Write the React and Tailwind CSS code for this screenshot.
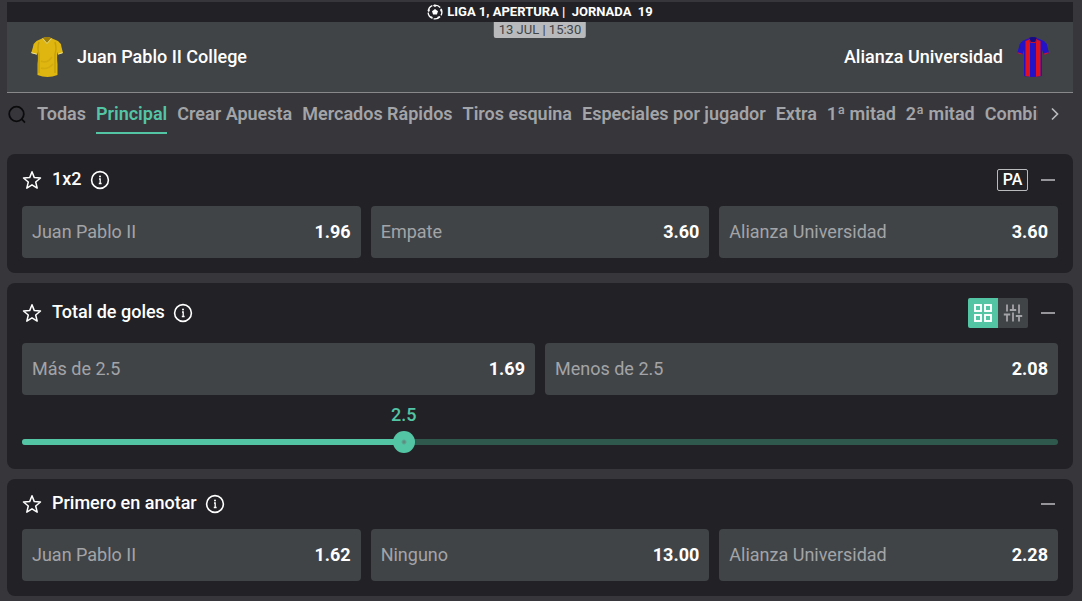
import { useState } from 'react'
import clsx from 'clsx'

const tabs = [
  'Todas',
  'Principal',
  'Crear Apuesta',
  'Mercados Rápidos',
  'Tiros esquina',
  'Especiales por jugador',
  'Extra',
  '1ª mitad',
  '2ª mitad',
  'Combinadas',
]

const GOALS_MIN = 0.75
const GOALS_MAX = 5.5

function BallIcon() {
  return (
    <svg className="size-4" viewBox="0 0 16 16" fill="none" aria-hidden="true">
      <circle cx="8" cy="8" r="6.900" stroke="#fff" strokeWidth="1.300" strokeDasharray="7 1.670" strokeDashoffset="3.500" />
      <path d="M8 5l3 2.200-1.100 3.400H6.100L5 7.200z" fill="#fff" />
      <path
        d="M5.400 1.600L8 3l2.600-1.400A7 7 0 0 0 5.400 1.600zM14.900 8.400l-1.700-1.500.3-2.500a7 7 0 0 1 1.400 4zM1.100 8.400l1.700-1.500-.3-2.500a7 7 0 0 0-1.400 4zM13.400 12.200l-2.500.2-1.200 2.300a7 7 0 0 0 3.700-2.500zM2.600 12.200l2.500.2 1.200 2.300a7 7 0 0 1-3.700-2.500z"
        fill="#fff"
      />
    </svg>
  )
}

function YellowShirt() {
  return (
    <svg className="h-10 w-8" viewBox="0 0 32 40" aria-hidden="true">
      <path d="M12 1Q16-1 20 1l7 3q3 2 3.500 6L32 16l-5 1.500-.5-2.500q-.8 6 0 12v11q-10 4-20 0V27q.8-6 0-12L6 17.500.2 16 2 10q.5-4 3.500-6z" fill="#dfb60f" />
      <path d="M8 5q-2 7 0 12v19M24 5q2 7 0 12v19" stroke="#b8920c" strokeWidth="1.500" fill="none" opacity=".6" />
      <path d="M10 24q6 3 11-4M10 31q7 2 12-4" stroke="#b8920c" strokeWidth="1.500" fill="none" opacity=".3" />
      <path d="M12 1Q16-1 20 1l-4 5z" fill="#9c7d0c" />
      <path d="M11.500 1.500L16 6.500l4.500-5" stroke="#d9d38a" strokeWidth="1" fill="none" />
      <path d="M.4 15.700l5.400 1.500M31.600 15.700l-4.400 1.400" stroke="#e9e2a0" strokeWidth="1" />
    </svg>
  )
}

function StripedShirt() {
  return (
    <svg className="h-10 w-8" viewBox="0 0 32 40" aria-hidden="true">
      <path d="M12 1Q16-1 20 1l7 3q3 2 3.500 6L32 16l-5 1.500L25 13v26q-9 2-18 0V13l-1.500 4.500L.2 16 2 10q.5-4 3.500-6z" fill="#2412c8" />
      <path d="M8.500 4l4-1.500.5 3V39.800l-4.500-.8zM23.500 4l-4-1.500-.5 3V39.800l4.500-.8z" fill="#e01220" />
      <path d="M12 1Q16-1 20 1l-1.500 4h-5z" fill="#170b80" />
      <path d="M12 1.500l1.500 4h5l1.500-4" stroke="#c0122c" strokeWidth="1" fill="none" />
      <path d="M.4 15.700l5 1.500M31.600 15.700l-4.600 1.400" stroke="#d01230" strokeWidth="1.200" />
    </svg>
  )
}

function StarIcon() {
  return (
    <svg className="size-5" viewBox="0 0 20 20" fill="none" aria-hidden="true">
      <path
        d="M10 1.800l2.300 5.800 6.200.4-4.800 4 1.500 6.100-5.200-3.300-5.200 3.300L6.300 12 1.500 8l6.200-.4z"
        stroke="#fff"
        strokeWidth="1.500"
        strokeLinejoin="round"
      />
    </svg>
  )
}

function InfoIcon() {
  return (
    <svg className="size-5" viewBox="0 0 20 20" fill="none" aria-hidden="true">
      <circle cx="10" cy="10" r="8.400" stroke="#fff" strokeWidth="1.600" />
      <path d="M9 9h1.200v4.500M8.800 13.500h2.800" stroke="#fff" strokeWidth="1.300" />
      <circle cx="10" cy="6.600" r="1" fill="#fff" />
    </svg>
  )
}

function GridIcon() {
  return (
    <svg className="size-5" viewBox="0 0 20 20" fill="none" stroke="#fff" strokeWidth="1.900" aria-hidden="true">
      <rect x="2" y="2" width="6" height="6" />
      <rect x="12" y="2" width="6" height="6" />
      <rect x="2" y="12" width="6" height="6" />
      <rect x="12" y="12" width="6" height="6" />
    </svg>
  )
}

function SlidersIcon() {
  return (
    <svg className="size-5" viewBox="0 0 20 20" fill="none" stroke="#a3a4a7" strokeWidth="1.800" aria-hidden="true">
      <path d="M4 1.500v7M.8 11.500h6.400M4 11.500v7M10 1.500v5M6.800 7h6.400M10 9.500v9M16 1.500v9M12.800 13h6.400M16 13v5.500" />
    </svg>
  )
}

function Market({ title, headerClass, actions, children }) {
  const [open, setOpen] = useState(true)

  return (
    <section className="rounded-lg bg-[#222226] px-[15px] pb-[15px]">
      <div className={clsx('flex items-center', headerClass)}>
        <button aria-label="Favorito">
          <StarIcon />
        </button>
        <h2 className="ml-2.5 pb-0.5 text-lg leading-6 font-medium text-white">{title}</h2>
        <button className="ml-2" aria-label="Información">
          <InfoIcon />
        </button>
        <div className="ml-auto flex items-center gap-[13px]">
          {actions}
          <button
            className="flex h-6 w-[17px] items-center"
            onClick={() => setOpen(!open)}
            aria-label="Contraer"
            aria-expanded={open}
          >
            <span className="h-0.5 w-3.5 bg-[#96969a]" />
          </button>
        </div>
      </div>
      {open && children}
    </section>
  )
}

function Option({ label, odds }) {
  return (
    <button className="flex h-[52px] items-center justify-between rounded bg-[#414447] px-2.5 text-lg">
      <span className="text-[#a3a4a7]">{label}</span>
      <span className="font-bold text-white">{odds}</span>
    </button>
  )
}

function App() {
  const [activeTab, setActiveTab] = useState('Principal')
  const [goals, setGoals] = useState(2.5)
  const percent = ((goals - GOALS_MIN) / (GOALS_MAX - GOALS_MIN)) * 100

  return (
    <div className="min-h-screen bg-[#37363b] pt-0.5 pr-[9px] pb-[5px] pl-[7px] font-[Roboto,sans-serif]">
      <header>
        <div className="flex h-5 items-center justify-center gap-1 bg-[#222226] text-[13px] font-bold text-white">
          <BallIcon />
          <span className="whitespace-pre">LIGA 1, APERTURA |  JORNADA  19</span>
        </div>
        <div className="relative flex h-[71px] items-center justify-between border-b border-[#88888b] bg-[#414447] px-6 text-lg font-medium text-white">
          <div className="flex items-center gap-3.5">
            <YellowShirt />
            <span>Juan Pablo II College</span>
          </div>
          <time className="absolute top-0 left-1/2 -translate-x-1/2 rounded-b-xs bg-[#b9babc] px-[5px] text-[13px] leading-4 font-normal text-[#414447]">
            13 JUL | 15:30
          </time>
          <div className="flex items-center gap-3.5">
            <span>Alianza Universidad</span>
            <StripedShirt />
          </div>
        </div>
      </header>

      <nav className="mb-5 flex h-[41px] items-center">
        <button className="mr-2.5 shrink-0" aria-label="Buscar">
          <svg className="size-5" viewBox="0 0 20 20" fill="none" stroke="#0b0b0d" strokeWidth="1.800" aria-hidden="true">
            <circle cx="9.500" cy="10" r="7.300" />
            <path d="M14.700 15.200l3.300 3.500" />
          </svg>
        </button>
        <div className="flex h-full min-w-0 flex-1 gap-2.5 overflow-hidden">
          {tabs.map(tab => (
            <button
              key={tab}
              onClick={() => setActiveTab(tab)}
              className={clsx(
                'shrink-0 border-b-2 pt-0.5 text-lg font-semibold whitespace-nowrap',
                tab === activeTab ? 'border-[#53c5a5] text-[#53c5a5]' : 'border-transparent text-[#a3a4a7]'
              )}
            >
              {tab}
            </button>
          ))}
        </div>
        <button className="ml-2.5 w-[25px] shrink-0" aria-label="Siguiente">
          <svg className="size-3.5" viewBox="0 0 14 14" fill="none" stroke="#b9babc" strokeWidth="1.700" aria-hidden="true">
            <path d="M4 1.500l5.500 5.500L4 12.500" />
          </svg>
        </button>
      </nav>

      <main className="flex flex-col gap-2.5">
        <Market
          title="1x2"
          headerClass="h-[52px]"
          actions={
            <button className="h-[22px] w-[31px] rounded-xs border border-[#b9babc] text-base leading-5 font-medium text-white">
              PA
            </button>
          }
        >
          <div className="grid grid-cols-3 gap-2.5">
            <Option label="Juan Pablo II" odds="1.96" />
            <Option label="Empate" odds="3.60" />
            <Option label="Alianza Universidad" odds="3.60" />
          </div>
        </Market>

        <Market
          title="Total de goles"
          headerClass="h-[60px]"
          actions={
            <div className="flex overflow-hidden rounded-xs">
              <button className="grid size-[30px] place-items-center bg-[#53c5a5]" aria-label="Vista de cuadrícula">
                <GridIcon />
              </button>
              <button className="grid size-[30px] place-items-center bg-[#414447]" aria-label="Vista de control">
                <SlidersIcon />
              </button>
            </div>
          }
        >
          <div className="grid grid-cols-2 gap-2.5">
            <Option label={`Más de ${goals}`} odds="1.69" />
            <Option label={`Menos de ${goals}`} odds="2.08" />
          </div>
          <div className="relative pt-9 pb-px">
            <label
              htmlFor="goals"
              className="absolute top-2 -translate-x-1/2 text-lg leading-6 font-medium text-[#53c5a5]"
              style={{ left: `${percent}%` }}
            >
              {goals}
            </label>
            <div className="relative flex h-[22px] items-center">
              <div className="h-1.5 w-full overflow-hidden rounded-full bg-[#30594e]">
                <div className="h-full bg-[#53c5a5]" style={{ width: `${percent}%` }} />
              </div>
              {/* Wider than the track by half a thumb on each side */}
              <input
                id="goals"
                type="range"
                min={GOALS_MIN}
                max={GOALS_MAX}
                step="0.25"
                value={goals}
                onChange={e => setGoals(Number(e.target.value))}
                className="absolute inset-y-0 -left-[11px] w-[calc(100%+22px)] cursor-pointer appearance-none bg-transparent [&::-webkit-slider-thumb]:size-[22px] [&::-webkit-slider-thumb]:appearance-none [&::-webkit-slider-thumb]:rounded-full [&::-webkit-slider-thumb]:bg-[radial-gradient(circle,#5f8c80_1px,#53c5a5_3px)]"
              />
            </div>
          </div>
        </Market>

        <Market title="Primero en anotar" headerClass="h-[50px]">
          <div className="grid grid-cols-3 gap-2.5">
            <Option label="Juan Pablo II" odds="1.62" />
            <Option label="Ninguno" odds="13.00" />
            <Option label="Alianza Universidad" odds="2.28" />
          </div>
        </Market>
      </main>
    </div>
  )
}

export default App
